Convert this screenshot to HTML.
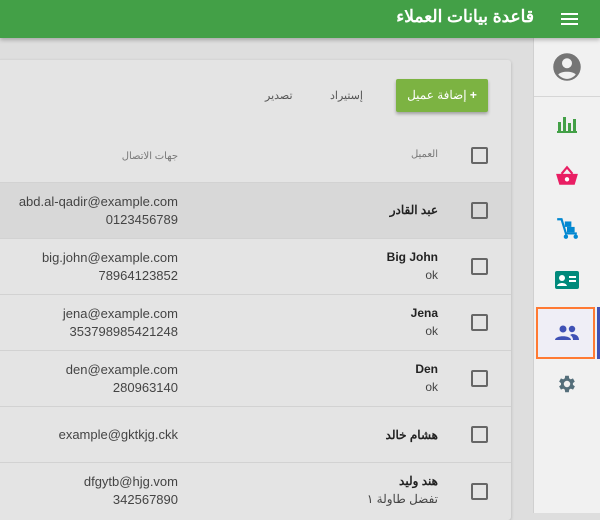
<!DOCTYPE html>
<html><head><meta charset="utf-8"><style>
*{box-sizing:border-box;margin:0;padding:0}
body{width:600px;height:513px;overflow:hidden;background:#dedede;font-family:"Liberation Sans","Noto Sans CJK SC",sans-serif;position:relative}
.hdr{position:absolute;left:0;top:0;width:600px;height:38px;background:#43a047;box-shadow:0 2px 4px rgba(0,0,0,.25);z-index:3}
.hdr .t{position:absolute;right:66px;top:7px;color:#fff;font-size:17px;font-weight:bold}
.hdr .m{position:absolute;right:22px;top:13px;width:17px}
.hdr .m i{display:block;height:2px;background:#fff;margin-bottom:3px}
.side{position:absolute;left:533px;top:38px;width:67px;height:475px;background:#f1f1f1;border-left:1px solid #d0d0d0}
.prof{height:59px;border-bottom:1px solid #d6d6d6;position:relative}
.ic{position:absolute;left:50%;transform:translate(-50%,-50%)}
.card{position:absolute;left:-4px;top:60px;width:515px;height:460px;background:#e4e4e4;box-shadow:0 1px 3px rgba(0,0,0,.2);border-radius:3px}
.btn{position:absolute;left:396px;top:79px;width:92px;height:33px;background:#7cb342;color:#fff;font-size:12px;text-align:center;line-height:33px;border-radius:2px;box-shadow:0 2px 3px rgba(0,0,0,.3);direction:rtl}
.lnk{position:absolute;top:89px;font-size:11px;color:#555}
.row{position:absolute;left:0;width:511px;border-top:1px solid #d2d2d2}
.cb{position:absolute;left:471px;width:17px;height:17px;border:2px solid #666;border-radius:2px}
.nm{position:absolute;right:73px;font-size:12px;color:#222;text-align:right;font-weight:bold;white-space:nowrap}
.nm span{display:block;font-weight:normal;color:#444;margin-top:4px}
.ct{position:absolute;right:333px;font-size:13px;color:#444;text-align:right;line-height:18px;white-space:nowrap}
</style></head><body>
<div class="hdr"><div class="t">قاعدة بيانات العملاء</div><div class="m"><i></i><i></i><i></i></div></div>
<div class="card"></div>
<div class="btn"><b>+</b> إضافة عميل</div>
<div class="lnk" style="left:330px">إستيراد</div>
<div class="lnk" style="left:265px">تصدير</div>
<div class="row" style="top:130px;height:52px;border-top:none"><div class="cb" style="top:17px"></div><div class="nm" style="top:19px;font-weight:normal;font-size:10px;color:#777">العميل</div><div class="ct" style="top:18px;font-size:10px;color:#777">جهات الاتصال</div></div>
<div class="row" style="top:182px;height:56px;background:#d8d8d8"><div class="cb" style="top:19px"></div><div class="nm" style="top:20px">عبد القادر</div><div class="ct" style="top:10px">abd.al-qadir@example.com<br>0123456789</div></div>
<div class="row" style="top:238px;height:56px"><div class="cb" style="top:19px"></div><div class="nm" style="top:11px">Big John<span>ok</span></div><div class="ct" style="top:10px">big.john@example.com<br>78964123852</div></div>
<div class="row" style="top:294px;height:56px"><div class="cb" style="top:19px"></div><div class="nm" style="top:11px">Jena<span>ok</span></div><div class="ct" style="top:10px">jena@example.com<br>353798985421248</div></div>
<div class="row" style="top:350px;height:56px"><div class="cb" style="top:19px"></div><div class="nm" style="top:11px">Den<span>ok</span></div><div class="ct" style="top:10px">den@example.com<br>280963140</div></div>
<div class="row" style="top:406px;height:56px"><div class="cb" style="top:19px"></div><div class="nm" style="top:21px">هشام خالد</div><div class="ct" style="top:19px">example@gktkjg.ckk</div></div>
<div class="row" style="top:462px;height:56px"><div class="cb" style="top:20px"></div><div class="nm" style="top:11px">هند وليد<span>تفضل طاولة ١</span></div><div class="ct" style="top:10px">dfgytb@hjg.vom<br>342567890</div></div>
<div class="side">
<div class="prof"><svg class="ic" style="top:29px" width="30" height="30" viewBox="0 0 24 24"><circle cx="12" cy="12" r="11" fill="#757575"/><circle cx="12" cy="9" r="4" fill="#f1f1f1"/><path d="M5 18c2-3 12-3 14 0c-2 2.5-5 3.5-7 3.5S7 20.5 5 18z" fill="#f1f1f1"/></svg></div>
<svg class="ic" style="top:86px" width="22" height="20" viewBox="0 0 22 20"><rect x="2" y="8" width="3" height="10" fill="#43a047"/><rect x="7" y="3" width="3" height="15" fill="#43a047"/><rect x="12" y="9" width="3" height="9" fill="#43a047"/><rect x="17" y="5" width="3" height="13" fill="#43a047"/><rect x="1" y="17" width="20" height="2" fill="#43a047"/></svg>
<svg class="ic" style="top:138px" width="24" height="22" viewBox="0 0 22 20"><path d="M6 8L11 2L16 8" stroke="#e91e63" stroke-width="2" fill="none"/><path d="M1 8h20l-3 10H4z" fill="#e91e63"/><circle cx="11" cy="13" r="2" fill="#fff"/></svg>
<svg class="ic" style="top:190px" width="24" height="24" viewBox="0 0 22 22"><path d="M2 3h4l4 13h10" stroke="#0288d1" stroke-width="2" fill="none"/><rect x="9" y="5" width="6" height="5" fill="#0288d1"/><rect x="11" y="10" width="7" height="5" fill="#0288d1"/><circle cx="10" cy="19" r="2" fill="#0288d1"/><circle cx="19" cy="19" r="2" fill="#0288d1"/></svg>
<svg class="ic" style="top:242px" width="24" height="18" viewBox="0 0 24 18"><rect width="24" height="18" rx="2" fill="#00897b"/><circle cx="7" cy="7" r="3" fill="#fff"/><path d="M2 15c1-4 9-4 10 0z" fill="#fff"/><rect x="14" y="5" width="7" height="2" fill="#fff"/><rect x="14" y="9" width="7" height="2" fill="#fff"/></svg>
<div style="position:absolute;left:2px;top:269px;width:59px;height:52px;border:2px solid #ff7a33;background:#efeef6"></div>
<div style="position:absolute;left:63px;top:269px;width:4px;height:52px;background:#3f51b5"></div>
<svg class="ic" style="top:295px" width="24" height="16" viewBox="0 0 24 16"><circle cx="8" cy="4" r="3.5" fill="#3f51b5"/><circle cx="17" cy="4" r="3.2" fill="#3f51b5"/><path d="M0 15c0-5 16-5 16 0z" fill="#3f51b5"/><path d="M17 9c4 0 7 2 7 6h-6c0-2-1-4-3-5z" fill="#3f51b5"/></svg>
<svg class="ic" style="top:346px" width="22" height="22" viewBox="0 0 24 24"><path fill="#546e7a" d="M19.4 13a7.5 7.5 0 000-2l2.1-1.6-2-3.5-2.5 1a7 7 0 00-1.7-1L15 3h-4l-.4 2.9a7 7 0 00-1.7 1l-2.5-1-2 3.5L6.5 11a7.5 7.5 0 000 2l-2.1 1.6 2 3.5 2.5-1a7 7 0 001.7 1L11 21h4l.4-2.9a7 7 0 001.7-1l2.5 1 2-3.5zM13 15.5a3.5 3.5 0 110-7 3.5 3.5 0 010 7z" transform="translate(-1 0)"/></svg>
</div>
</body></html>
